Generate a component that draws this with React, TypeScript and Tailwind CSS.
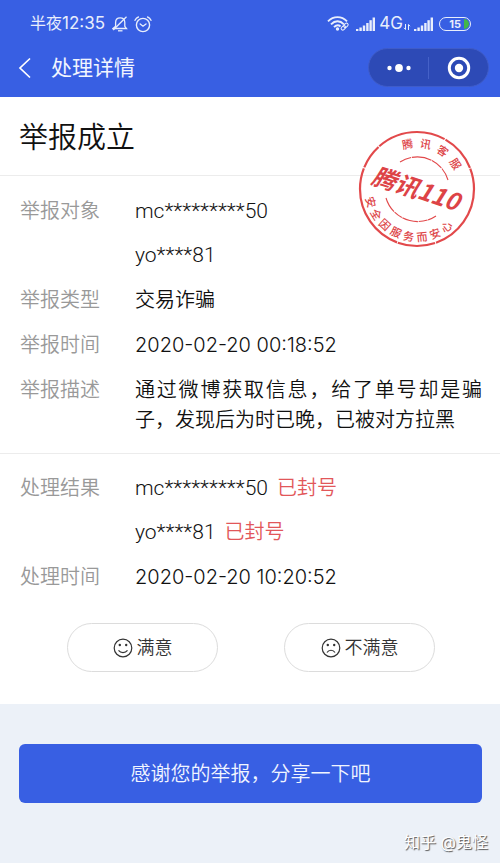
import { ReactNode } from "react";

type Account = {
  name: string;
  status?: string;
};

type RowProps = {
  readonly label: string;
  readonly children: ReactNode;
};

type ArcTextProps = {
  readonly text: string;
  readonly radius: number;
  readonly from: number;
  readonly step: number;
  readonly inward?: boolean;
};

const accounts: Account[] = [{ name: "mc*********50" }, { name: "yo****81" }];

const results: Account[] = [
  { name: "mc*********50", status: "已封号" },
  { name: "yo****81", status: "已封号" },
];

function Signal() {
  return (
    <svg width="20" height="15" viewBox="0 0 20 15" fill="#e8eefc" aria-hidden="true">
      <rect x="0" y="12" width="2.4" height="2" />
      <rect x="3.4" y="10.5" width="2.4" height="3.5" />
      <rect x="6.8" y="8.5" width="2.4" height="5.5" />
      <rect x="10.2" y="6" width="2.4" height="8" />
      <rect x="13.4" y="3.2" width="2.4" height="10.8" />
      <rect x="16.6" y="0.5" width="2.4" height="13.5" />
    </svg>
  );
}

function StatusBar() {
  return (
    <div className="flex h-[46px] items-center justify-between pl-[30px] pr-[29px] pt-[2px] font-normal text-[#e8eefc]">
      <div className="flex items-center">
        <span className="text-[16px]">
          半夜<span className="text-[17px]">12:35</span>
        </span>
        <svg
          className="ml-[7px]"
          width="16"
          height="16"
          viewBox="0 0 16 16"
          fill="none"
          stroke="currentColor"
          strokeWidth="1.3"
          aria-hidden="true"
        >
          <path d="M1 12.5h13.5l-1.7-2.2V6.5C12.8 3.6 11 1.8 8.2 1.8S3.6 3.6 3.6 6.5v3.8z" />
          <path d="M14.5 .8L1.2 14" />
          <path d="M6 14.8h4.5" />
        </svg>
        <svg
          className="ml-[6px]"
          width="18"
          height="17"
          viewBox="0 0 18 17"
          fill="none"
          stroke="currentColor"
          strokeWidth="1.4"
          strokeLinecap="round"
          aria-hidden="true"
        >
          <circle cx="9" cy="9" r="6.6" />
          <path d="M1 4.3C1.7 2.8 2.8 1.6 4.4 1M17 4.3C16.3 2.8 15.2 1.6 13.6 1" />
          <path d="M6.2 8L9 10.2 12 8" />
        </svg>
      </div>

      <div className="flex items-center">
        <svg width="23" height="16" viewBox="0 0 23 16" fill="none" stroke="currentColor" aria-hidden="true">
          <path
            d="M1 5.3C6.5-.3 14.5-.3 20 5.3M4 8.3C8 4.2 13 4.2 17 8.3M7 11.2C9.2 9 11.8 9 13.5 10.5"
            strokeWidth="1.9"
          />
          <circle cx="10.5" cy="13" r="1.7" fill="currentColor" stroke="none" />
          <g strokeWidth="1">
            <rect x="17.3" y="6.8" width="3.2" height="5" rx="1.6" transform="rotate(45 18.9 9.3)" />
            <rect x="14.8" y="9.3" width="3.2" height="5" rx="1.6" transform="rotate(45 16.4 11.8)" />
          </g>
        </svg>
        <span className="ml-[6px]">
          <Signal />
        </span>
        <span className="ml-[3px] text-[17px]">4G</span>
        <svg
          className="mt-[6px]"
          width="8"
          height="6"
          viewBox="0 0 8 6"
          fill="none"
          stroke="currentColor"
          aria-hidden="true"
        >
          <path d="M2.5 0v5.5M1 3.8l1.5 1.7M5.5 6V.5M5.5 .5L7 2.2" />
        </svg>
        <span className="ml-[3px]">
          <Signal />
        </span>
        <span className="ml-[5px] flex h-[14px] w-[32px] items-center justify-end overflow-hidden rounded-full border border-[#e8eefc]">
          <span className="text-[11px] font-bold leading-none">15</span>
          <span className="ml-[3px] mr-px h-[10px] w-[5px] rounded-r-full bg-[#43b649]" />
        </span>
      </div>
    </div>
  );
}

function NavBar() {
  return (
    <div className="flex h-[51px] items-start justify-between pl-[18px] pr-[11px]">
      <div className="flex h-[44px] items-center">
        <button type="button" aria-label="返回" className="text-white">
          <svg width="14" height="22" viewBox="0 0 14 22" fill="none" stroke="currentColor" strokeWidth="1.7">
            <path d="M12 1.5L2 11l10 9.5" />
          </svg>
        </button>
        <h1 className="ml-[19px] text-[21px] font-normal text-[#f1f5ff]">处理详情</h1>
      </div>
      <div className="mt-[2px] flex h-[39px] w-[121px] items-center rounded-full border border-[#3f5cc9] bg-[#2d4ab6]">
        <button type="button" aria-label="更多" className="flex h-full flex-1 items-center justify-center">
          <svg width="24" height="8" viewBox="0 0 24 8" fill="#fff">
            <circle cx="2.5" cy="4" r="2.2" />
            <circle cx="12" cy="4" r="3.9" />
            <circle cx="21.5" cy="4" r="2.2" />
          </svg>
        </button>
        <span className="h-[22px] w-px bg-[#4561c8]" />
        <button type="button" aria-label="关闭" className="flex h-full flex-1 items-center justify-center">
          <svg width="24" height="24" viewBox="0 0 24 24">
            <circle cx="12" cy="12" r="9.7" fill="none" stroke="#fff" strokeWidth="3" />
            <circle cx="12" cy="12" r="4.2" fill="#fff" />
          </svg>
        </button>
      </div>
    </div>
  );
}

// Places each character on a circle; angles are degrees clockwise from 12 o'clock.
function ArcText({ text, radius, from, step, inward }: ArcTextProps) {
  const size = 11;
  const glyphs = [...text].map((_, i) => {
    const angle = from + step * i;
    const turn = inward ? angle + 180 : angle;
    const a = (angle * Math.PI) / 180;
    const t = (turn * Math.PI) / 180;
    const dx = -size / 2;
    const dy = size * 0.38;
    return {
      x: radius * Math.sin(a) + dx * Math.cos(t) - dy * Math.sin(t),
      y: -radius * Math.cos(a) + dx * Math.sin(t) + dy * Math.cos(t),
      turn,
    };
  });

  return (
    <text
      x={glyphs.map((g) => g.x.toFixed(2)).join(" ")}
      y={glyphs.map((g) => g.y.toFixed(2)).join(" ")}
      rotate={glyphs.map((g) => g.turn).join(" ")}
      fontSize={size}
      fontWeight="500"
    >
      {text}
    </text>
  );
}

function Stamp() {
  return (
    <svg
      className="absolute right-[23px] top-[32px] font-['Noto_Sans_CJK_SC',sans-serif]"
      width="120"
      height="120"
      viewBox="-60 -60 120 120"
      fill="none"
      role="img"
      aria-label="腾讯110"
    >
      <g stroke="#e2494b">
        <circle r="57" strokeWidth="2.2" strokeDasharray="70 1 38 .8 90 1.2 25 1" />
        <path d="M-17 -27A32 32 0 0 1 31 -9" strokeWidth="1.1" strokeDasharray="12 .8 20 .6" />
        <path d="M-31 9A33 33 0 0 0 19 27" strokeWidth="1.1" strokeDasharray="16 .8 9 .6" />
      </g>
      <g fill="#dd4346">
        <ArcText text="腾讯客服" radius={46} from={-12} step={23} />
        <ArcText text="安全因服务而安心" radius={48} from={254} step={-16} inward />
        <text
          x="-1"
          y="9"
          fontSize="24"
          fontWeight="700"
          fontStyle="italic"
          textAnchor="middle"
          transform="rotate(18)"
        >
          腾讯110
        </text>
      </g>
    </svg>
  );
}

function Row({ label, children }: RowProps) {
  return (
    <div className="flex">
      <dt className="w-[115px] shrink-0 text-[#999]">{label}</dt>
      <dd className="min-w-0 flex-1">{children}</dd>
    </div>
  );
}

function AccountList({ items }: { readonly items: Account[] }) {
  return (
    <ul className="flex flex-col gap-[14px]">
      {items.map((item) => (
        <li key={item.name} className="flex gap-[9px]">
          <span className="font-[Roboto,sans-serif] text-[21px]">{item.name}</span>
          {item.status && <span className="text-[#e2575a]">{item.status}</span>}
        </li>
      ))}
    </ul>
  );
}

function RateButton({ label, happy }: { readonly label: string; readonly happy?: boolean }) {
  return (
    <button
      type="button"
      className="flex h-[49px] w-[151px] items-center justify-center gap-[4px] rounded-full border border-[#dcdcdc] text-[18px] text-[#333]"
    >
      <svg width="20" height="20" viewBox="0 0 20 20" fill="none" stroke="currentColor" strokeWidth="1.2" aria-hidden="true">
        <circle cx="10" cy="10" r="8.8" />
        <circle cx="6.8" cy="7" r="1.2" fill="currentColor" stroke="none" />
        <circle cx="13.2" cy="7" r="1.2" fill="currentColor" stroke="none" />
        {happy ? (
          <path d="M5.5 12.3C7.8 15.3 12.2 15.3 14.5 12.3" />
        ) : (
          <path d="M6 14.5C7.8 11.5 12.2 11.5 14 14.5" />
        )}
      </svg>
      {label}
    </button>
  );
}

function App() {
  return (
    <div className="flex min-h-screen flex-col bg-[#ecf1f8] font-[Inter,'Noto_Sans_CJK_SC',sans-serif] font-[350]">
      <header className="bg-[#385fe3]">
        <StatusBar />
        <NavBar />
      </header>

      <main className="relative bg-white text-[20px] leading-[30px] text-[#111]">
        <h2 className="flex h-[79px] items-center border-b border-[#ececec] px-[19px] pt-[4px] text-[29px]">
          举报成立
        </h2>
        <Stamp />

        <dl className="flex flex-col gap-[15px] border-b border-[#ececec] pb-[18px] pl-[20px] pr-[18px] pt-[20px]">
          <Row label="举报对象">
            <AccountList items={accounts} />
          </Row>
          <Row label="举报类型">交易诈骗</Row>
          <Row label="举报时间">2020-02-20 00:18:52</Row>
          <Row label="举报描述">
            <p className="text-justify">
              通过微博获取信息，给了单号却是骗子，发现后为时已晚，已被对方拉黑
            </p>
          </Row>
        </dl>

        <dl className="flex flex-col gap-[15px] pl-[20px] pr-[18px] pt-[19px]">
          <Row label="处理结果">
            <AccountList items={results} />
          </Row>
          <Row label="处理时间">2020-02-20 10:20:52</Row>
        </dl>

        <div className="flex justify-between pb-[32px] pl-[67px] pr-[65px] pt-[31px]">
          <RateButton label="满意" happy />
          <RateButton label="不满意" />
        </div>
      </main>

      <footer className="pt-[40px]">
        <div className="pl-[19px] pr-[18px]">
          <button type="button" className="h-[59px] w-full rounded-[6px] bg-[#385fe3] text-[20px] text-[#f1f5ff]">
            感谢您的举报，分享一下吧
          </button>
        </div>
        <p className="mt-[27px] pr-[12px] text-right text-[16px] font-normal text-white [text-shadow:1px_1px_1px_#555]">
          知乎 @鬼怪
        </p>
      </footer>
    </div>
  );
}

export default App;
